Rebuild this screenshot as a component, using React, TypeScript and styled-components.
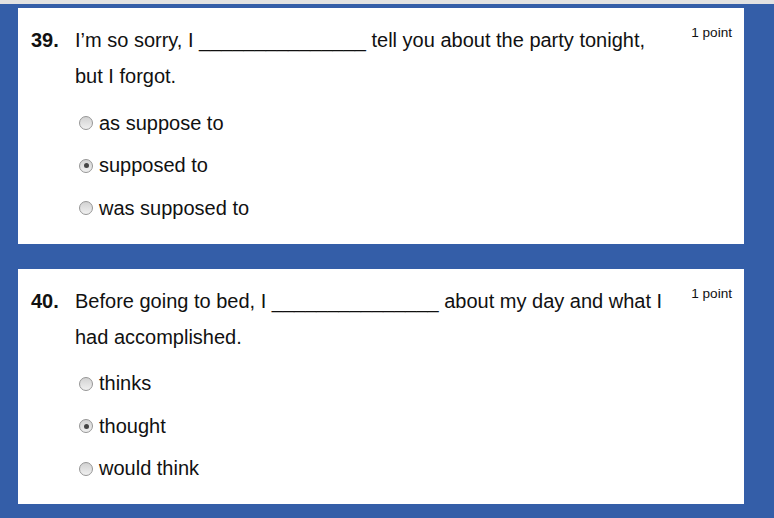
import React from "react";
import styled, { createGlobalStyle } from "styled-components";

const GlobalStyle = createGlobalStyle`
  html, body {
    margin: 0;
    padding: 0;
    background: #345ea8;
    font-family: "Liberation Sans", Arial, sans-serif;
    color: #111;
  }
`;

const TopStrip = styled.div`
  height: 4px;
  background: #e2e2e2;
`;

const Page = styled.div`
  display: flex;
  flex-direction: column;
  gap: 25px;
  padding: 4px 30px 0 18px;
`;

const Card = styled.section`
  display: flex;
  align-items: flex-start;
  background: #fff;
  padding: 14px 12px 14px 13px;
`;

const Number = styled.div`
  width: 44px;
  flex: none;
  font-size: 20px;
  font-weight: 700;
  line-height: 36px;
`;

const Body = styled.div`
  flex: 1;
  min-width: 0;
`;

const QuestionText = styled.div`
  font-size: 20px;
  line-height: 36px;
`;

const Points = styled.div`
  flex: none;
  margin-left: 20px;
  margin-top: 3px;
  font-size: 13.6px;
  line-height: 16px;
`;

const Options = styled.div`
  display: flex;
  flex-direction: column;
  margin-top: 8px;
`;

const OptionRow = styled.label`
  display: flex;
  align-items: center;
  height: 42.5px;
  font-size: 20px;
`;

const Radio = styled.input.attrs({ type: "radio" })`
  appearance: none;
  -webkit-appearance: none;
  margin: 0 6px 0 4px;
  width: 14px;
  height: 14px;
  border-radius: 50%;
  border: 1px solid #969696;
  box-sizing: border-box;
  background: linear-gradient(#d2d2d2, #f0f0f0);
  position: relative;
  flex: none;
  &:checked::after {
    content: "";
    position: absolute;
    left: 3.5px;
    top: 3.5px;
    width: 5px;
    height: 5px;
    border-radius: 50%;
    background: #444;
  }
`;

type Q = {
  num: string;
  text: string;
  name: string;
  options: string[];
  checked: number;
};

const questions: Q[] = [
  {
    num: "39.",
    text: "I\u2019m so sorry, I _______________ tell you about the party tonight, but I forgot.",
    name: "q39",
    options: ["as suppose to", "supposed to", "was supposed to"],
    checked: 1,
  },
  {
    num: "40.",
    text: "Before going to bed, I _______________ about my day and what I had accomplished.",
    name: "q40",
    options: ["thinks", "thought", "would think"],
    checked: 1,
  },
];

export default function App() {
  return (
    <>
      <GlobalStyle />
      <TopStrip />
      <Page>
        {questions.map((q) => (
          <Card key={q.num}>
            <Number>{q.num}</Number>
            <Body>
              <QuestionText>{q.text}</QuestionText>
              <Options>
                {q.options.map((o, i) => (
                  <OptionRow key={o}>
                    <Radio name={q.name} defaultChecked={i === q.checked} />
                    {o}
                  </OptionRow>
                ))}
              </Options>
            </Body>
            <Points>1 point</Points>
          </Card>
        ))}
      </Page>
    </>
  );
}
